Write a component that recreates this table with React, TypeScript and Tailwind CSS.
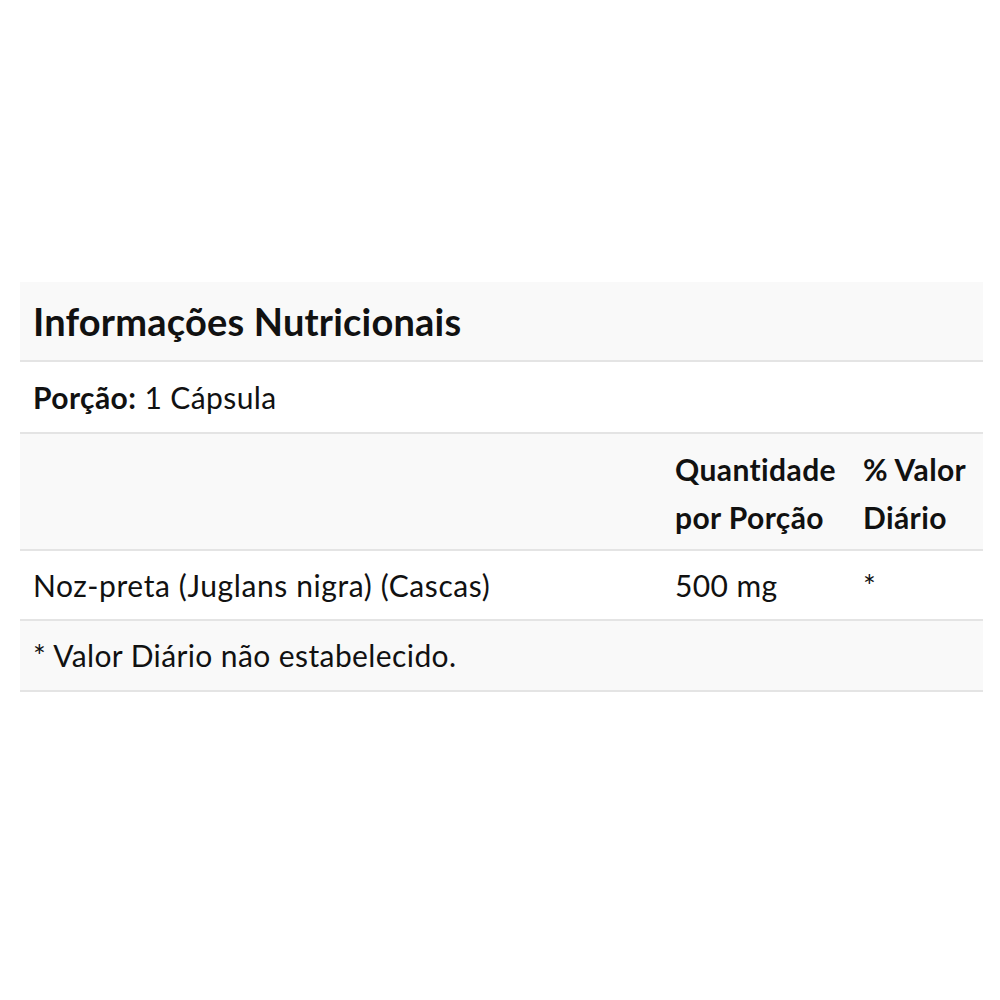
export default function App() {
  const font = { fontFamily: 'Lato, "Noto Sans", sans-serif' };
  return (
    <div className="w-[1000px] h-[1000px] bg-white pt-[282px] px-[20px] [font-variant-ligatures:none]" style={font}>
      <div className="w-[963px] text-[#111111]">
        <div className="h-[80px] bg-[#f9f9f9] border-b-2 border-[#e4e4e4] px-[13px] flex items-center">
          <h2 className="text-[38px] font-bold leading-none tracking-[0.2px]">Informações Nutricionais</h2>
        </div>
        <div className="h-[72px] bg-white border-b-2 border-[#e4e4e4] px-[13px] flex items-center text-[30px] tracking-[0.4px] whitespace-pre">
          <span className="font-bold">Porção:</span> 1 Cápsula
        </div>
        <div className="h-[117px] bg-[#f9f9f9] border-b-2 border-[#e4e4e4] grid grid-cols-[642px_188px_133px] text-[30px] tracking-[0.4px] font-bold leading-[48px] pt-[11px]">
          <div className="px-[13px]"></div>
          <div className="px-[13px]">Quantidade<br />por Porção</div>
          <div className="px-[13px]">% Valor<br />Diário</div>
        </div>
        <div className="h-[70px] bg-white border-b-2 border-[#e4e4e4] grid grid-cols-[642px_188px_133px] items-center text-[30px] tracking-[0.4px] leading-[48px]">
          <div className="px-[13px] tracking-[0.6px]">Noz-preta (Juglans nigra) (Cascas)</div>
          <div className="px-[13px]">500 mg</div>
          <div className="px-[13px]">*</div>
        </div>
        <div className="h-[71px] bg-[#f9f9f9] border-b-2 border-[#e4e4e4] px-[13px] flex items-center text-[30px] tracking-[0.4px]">
          * Valor Diário não estabelecido.
        </div>
      </div>
    </div>
  );
}
